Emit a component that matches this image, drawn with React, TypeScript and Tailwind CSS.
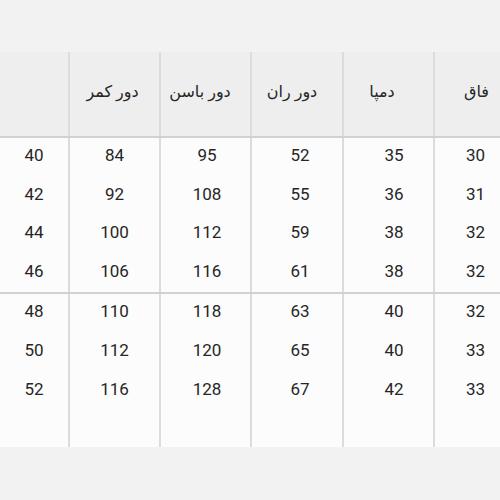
import React from "react";

const rowsA = [
  ["30", "35", "52", "95", "84", "40"],
  ["31", "36", "55", "108", "92", "42"],
  ["32", "38", "59", "112", "100", "44"],
  ["32", "38", "61", "116", "106", "46"],
];
const rowsB = [
  ["32", "40", "63", "118", "110", "48"],
  ["33", "40", "65", "120", "112", "50"],
  ["33", "42", "67", "128", "116", "52"],
];

const headers = ["فاق", "دمپا", "دور ران", "دور باسن", "دور کمر", ""];
const valPad = ["pl-[16px]", "pl-[11px]", "pl-[6px]", "pl-[3px]", "pl-0", "pl-0"];
const headPad = ["pl-[18px]", "pr-[13px]", "pr-[10px]", "pr-[11px]", "pr-[4px]", "pl-0"];
const colBorder = [
  "border-l-2 border-[#dcdcdc]",
  "border-l-2 border-[#dcdcdc]",
  "border-l-2 border-[#dcdcdc]",
  "border-l-2 border-[#dcdcdc]",
  "border-l-2 border-[#dcdcdc]",
  "",
];

const grid = "grid grid-cols-[67px_91px_92px_91px_91px_68px]";

function Row({ vals, pt }: { vals: string[]; pt: string }) {
  return (
    <div className={`${grid} h-[39px]`}>
      {vals.map((v, i) => (
        <div key={i} className={`${colBorder[i]} flex justify-center items-start ${pt}`}>
          <span className={`${valPad[i]} leading-[19px]`} dir="ltr">
            {v}
          </span>
        </div>
      ))}
    </div>
  );
}

export default function App() {
  return (
    <div
      className="w-[500px] h-[500px] bg-[#f3f2f2] text-[#262626] overflow-hidden"
      style={{ fontFamily: "Roboto, 'DejaVu Sans', sans-serif" }}
    >
      <div className="h-[52px]" />
      <div dir="rtl" className="w-[500px]">
        <div className={`${grid} h-[86px] bg-[#efeeee] border-b-2 border-[#d3d0d3]`}>
          {headers.map((h, i) => (
            <div key={i} className={`${colBorder[i]} flex justify-center items-center pb-[5px]`}>
              <span className={`${headPad[i]} text-[16px]`}>{h}</span>
            </div>
          ))}
        </div>
        <div className="bg-[#fcfcfc] text-[17px]">
          <div className="h-[156px] border-b-2 border-[#d3d0d3] flex flex-col">
            {rowsA.map((r, i) => (
              <Row key={i} vals={r} pt="pt-[8px]" />
            ))}
          </div>
          <div className="h-[153px] flex flex-col">
            {rowsB.map((r, i) => (
              <Row key={i} vals={r} pt="pt-[8px]" />
            ))}
            <div className={`${grid} flex-1`}>
              {colBorder.map((c, i) => (
                <div key={i} className={c} />
              ))}
            </div>
          </div>
        </div>
      </div>
    </div>
  );
}
